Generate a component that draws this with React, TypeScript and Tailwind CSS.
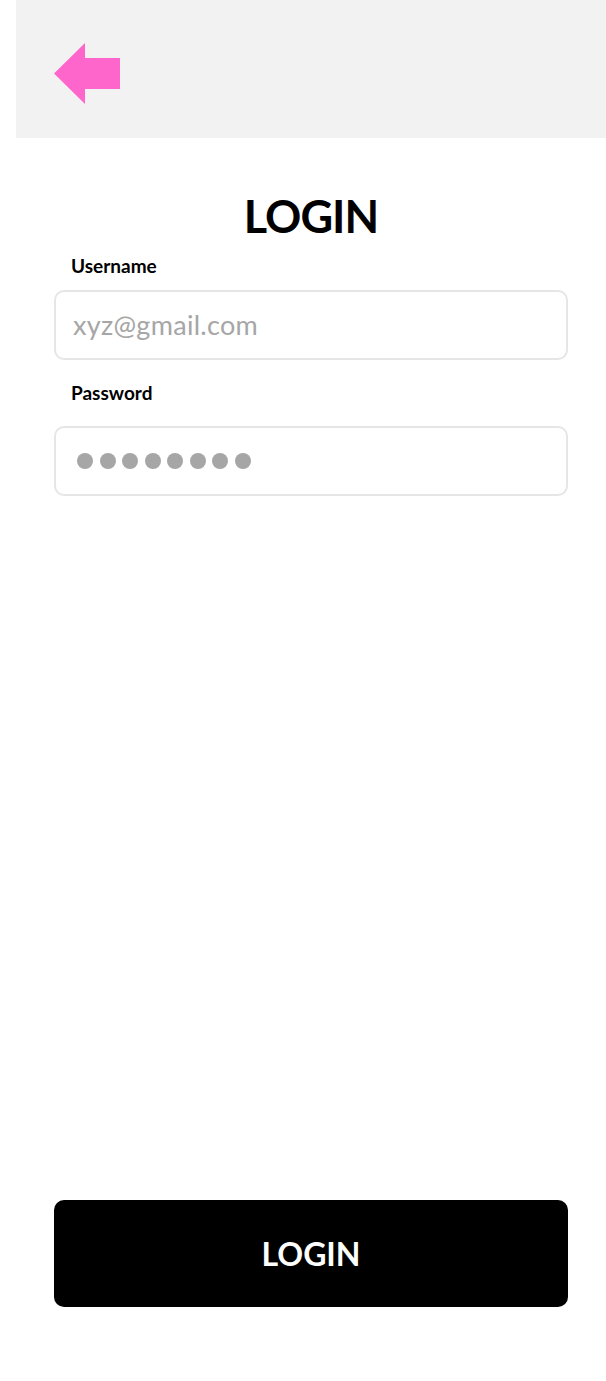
const font = { fontFamily: "Lato, 'Open Sans', sans-serif" };

function BackArrow() {
  return (
    <svg width="66" height="61" viewBox="0 0 66 61">
      <polygon points="0,30.5 31,0 31,15 66,15 66,46 31,46 31,61" fill="#ff66cc" />
    </svg>
  );
}

function Field({ label, children }: { label: string; children: React.ReactNode }) {
  return (
    <div className="flex flex-col">
      <label className="pl-[17px] text-[19px] font-bold leading-none text-black">{label}</label>
      {children}
    </div>
  );
}

export default function App() {
  return (
    <div className="ml-4 flex min-h-[1381px] flex-col bg-white" style={font}>
      <header className="h-[138px] bg-[#f2f2f2] pl-[38px] pt-[43px]">
        <button type="button">
          <BackArrow />
        </button>
      </header>

      <main className="flex flex-1 flex-col px-[38px]">
        <h1 className="mt-[56px] text-center text-[45px] font-bold leading-[44px] tracking-[-1px] text-black">
          LOGIN
        </h1>

        <div className="mt-[18px]">
          <Field label="Username">
            <div className="mt-[15px] flex h-[70px] items-center rounded-[10px] border-2 border-[#e6e6e6] px-[17px]">
              <span className="text-[27px] tracking-[0.3px] text-[#a6a6a6]">xyz@gmail.com</span>
            </div>
          </Field>
        </div>

        <div className="mt-[23px]">
          <Field label="Password">
            <div className="mt-[24px] flex h-[70px] items-center gap-[6.5px] rounded-[10px] border-2 border-[#e6e6e6] px-[21px]">
              {Array.from({ length: 8 }).map((_, i) => (
                <span key={i} className="h-[16px] w-[16px] rounded-full bg-[#a6a6a6]" />
              ))}
            </div>
          </Field>
        </div>

        <div className="flex-1" />

        <button
          type="button"
          className="mb-[74px] h-[107px] w-full rounded-[10px] bg-black text-[32px] font-bold text-white"
        >
          LOGIN
        </button>
      </main>
    </div>
  );
}
